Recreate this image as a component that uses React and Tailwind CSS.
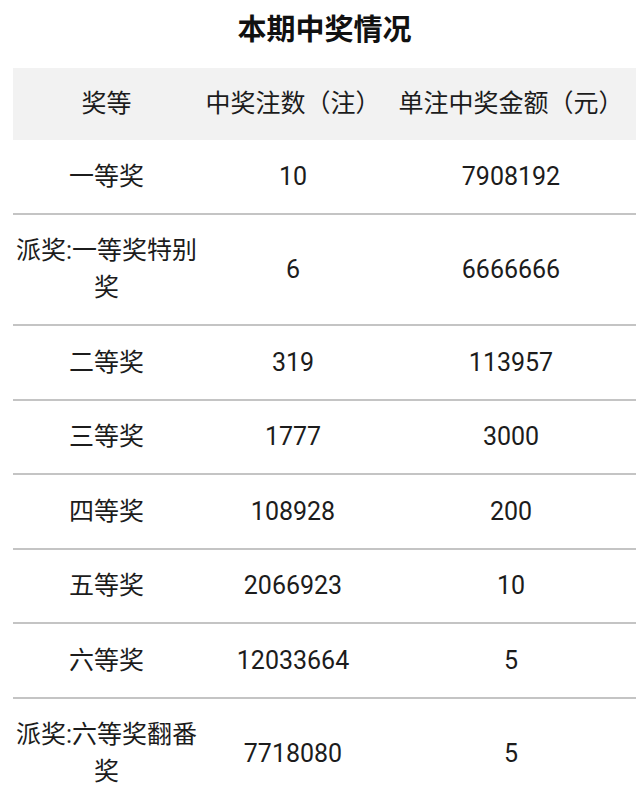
const rows = [
  ["一等奖", "10", "7908192"],
  ["派奖:一等奖特别奖", "6", "6666666"],
  ["二等奖", "319", "113957"],
  ["三等奖", "1777", "3000"],
  ["四等奖", "108928", "200"],
  ["五等奖", "2066923", "10"],
  ["六等奖", "12033664", "5"],
  ["派奖:六等奖翻番奖", "7718080", "5"],
];

export default function App() {
  return (
    <div
      className="w-[640px] h-[808px] bg-white text-[#1c1c1c] overflow-hidden"
      style={{ fontFamily: 'Roboto, "Noto Sans CJK SC", sans-serif' }}
    >
      <div className="ml-[13px] w-[623px]">
        <h1 className="pt-[12px] pb-[20px] text-center text-[29px] leading-[36px] font-bold text-[#111]">
          本期中奖情况
        </h1>
        <div className="grid grid-cols-[187px_186px_1fr] bg-[#f2f2f2] h-[72px] items-center text-center text-[25px]">
          <div>奖等</div>
          <div>中奖注数（注）</div>
          <div>单注中奖金额（元）</div>
        </div>
        {rows.map((r, i) => (
          <div
            key={i}
            className="grid grid-cols-[187px_186px_1fr] items-center text-center text-[25px] leading-[37px] py-[17.75px] border-b-2 border-[#c4c4c4]"
          >
            <div className="px-[2px]">{r[0]}</div>
            <div>{r[1]}</div>
            <div>{r[2]}</div>
          </div>
        ))}
      </div>
    </div>
  );
}
